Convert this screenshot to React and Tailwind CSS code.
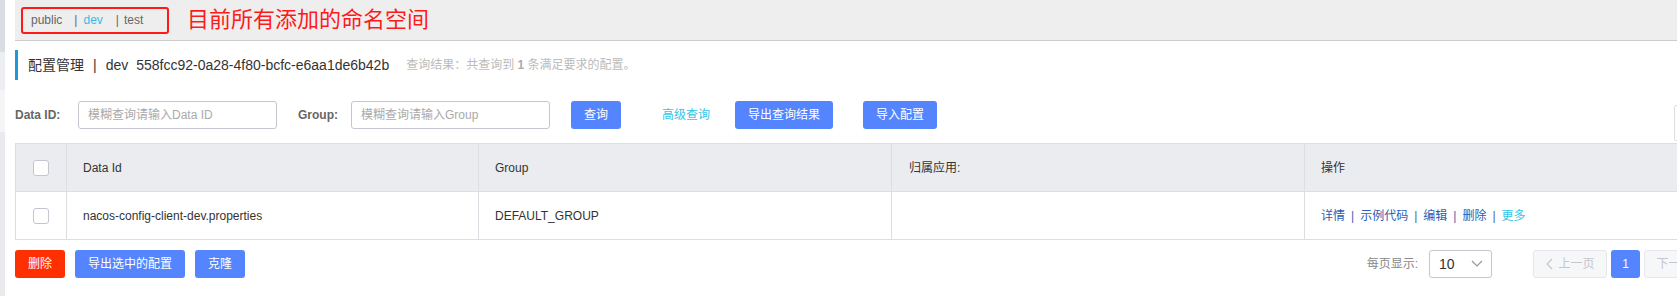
import React from "react"

const Checkbox = () => (
    <span className="block w-4 h-4 rounded-[3px] border border-[#c4c6cf] bg-white" />
)

const Btn = ({ children, red }) => (
    <button
        className={`h-[28px] px-[13px] rounded-[3px] text-[12px] text-white shrink-0 ${red ? "bg-[#ff3000]" : "bg-[#5584ff]"}`}
    >
        {children}
    </button>
)

const Sep = () => <span className="mx-[6px] text-[#4a64a8]">|</span>

function App() {
    return (
        <div className="relative flex w-[1677px] h-[296px] overflow-hidden bg-white font-['Liberation_Sans','Noto_Sans_CJK_SC',sans-serif]">
            {/* left edge strip */}
            <div className="w-[5px] shrink-0 flex flex-col">
                <div className="h-[52px] bg-[#d9dce2]" />
                <div className="h-[38px] bg-[#eceef2]" />
                <div className="h-[42px] bg-[#f4f5f7]" />
                <div className="flex-1 bg-[#e8eaee]" />
            </div>

            <div className="pl-[10px] shrink-0 w-[1713px]">
                {/* namespace bar */}
                <div className="h-[41px] bg-[#eeeeee] border-b border-[#cccccc] flex items-center">
                    <div className="ml-[6px] h-[27px] w-[148px] border-2 border-[#ff1a1a] rounded-[3px] flex items-center pl-[8px] text-[12px] text-[#666]">
                        <span>public</span>
                        <span className="ml-[12px]">|</span>
                        <span className="ml-[6px] text-[#33bde6]">dev</span>
                        <span className="ml-[13px]">|</span>
                        <span className="ml-[5px]">test</span>
                    </div>
                    <span className="ml-[18px] text-[22px] text-[#ff1a1a] leading-none">目前所有添加的命名空间</span>
                </div>

                {/* title */}
                <div className="mt-[9px] h-[30px] border-l-[3px] border-[#1a9ad6] flex items-center pl-[10px]">
                    <span className="text-[14px] text-[#333]">配置管理</span>
                    <span className="text-[14px] text-[#333] mx-[9px]">|</span>
                    <span className="text-[14px] text-[#333]">dev</span>
                    <span className="text-[14px] text-[#333] ml-[8px]">558fcc92-0a28-4f80-bcfc-e6aa1de6b42b</span>
                    <span className="ml-[17px] text-[12px] text-[#bbbbbb]">
                        查询结果：共查询到 <b className="text-[#aaa]">1</b> 条满足要求的配置。
                    </span>
                </div>

                {/* search row */}
                <div className="mt-[21px] h-[28px] flex items-center text-[12px]">
                    <span className="font-bold text-[#666] w-[63px] shrink-0">Data ID:</span>
                    <div className="w-[199px] h-[28px] border border-[#c4c6cf] rounded-[3px] flex items-center pl-[9px] text-[#aaa] shrink-0">
                        模糊查询请输入Data ID
                    </div>
                    <span className="ml-[21px] font-bold text-[#666] w-[53px] shrink-0">Group:</span>
                    <div className="w-[199px] h-[28px] border border-[#c4c6cf] rounded-[3px] flex items-center pl-[9px] text-[#aaa] shrink-0">
                        模糊查询请输入Group
                    </div>
                    <div className="ml-[21px]"><Btn>查询</Btn></div>
                    <span className="ml-[41px] text-[#33c5e6]">高级查询</span>
                    <div className="ml-[25px]"><Btn>导出查询结果</Btn></div>
                    <div className="ml-[30px]"><Btn>导入配置</Btn></div>
                </div>

                {/* table */}
                <div className="mt-[14px] border-l border-[#dcdee3] text-[12px] text-[#333]">
                    <div className="flex h-[49px] bg-[#ebecf0] border-y border-[#dcdee3]">
                        <div className="w-[50px] flex items-center justify-center"><Checkbox /></div>
                        <div className="w-[412px] border-l border-[#dcdee3] flex items-center pl-[16px]">Data Id</div>
                        <div className="w-[413px] border-l border-[#dcdee3] flex items-center pl-[16px]">Group</div>
                        <div className="w-[413px] border-l border-[#dcdee3] flex items-center pl-[17px]">归属应用:</div>
                        <div className="flex-1 border-l border-[#dcdee3] flex items-center pl-[16px]">操作</div>
                    </div>
                    <div className="flex h-[48px] border-b border-[#dcdee3]">
                        <div className="w-[50px] flex items-center justify-center"><Checkbox /></div>
                        <div className="w-[412px] border-l border-[#dcdee3] flex items-center pl-[16px]">nacos-config-client-dev.properties</div>
                        <div className="w-[413px] border-l border-[#dcdee3] flex items-center pl-[16px]">DEFAULT_GROUP</div>
                        <div className="w-[413px] border-l border-[#dcdee3]" />
                        <div className="flex-1 border-l border-[#dcdee3] flex items-center pl-[16px] text-[#2b5cb4]">
                            <span>详情</span>
                            <Sep />
                            <span>示例代码</span>
                            <Sep />
                            <span>编辑</span>
                            <Sep />
                            <span>删除</span>
                            <Sep />
                            <span className="text-[#33c5e6]">更多</span>
                        </div>
                    </div>
                </div>

                {/* footer */}
                <div className="mt-[10px] h-[28px] flex items-center text-[12px]">
                    <Btn red>删除</Btn>
                    <div className="ml-[10px]"><Btn>导出选中的配置</Btn></div>
                    <div className="ml-[10px]"><Btn>克隆</Btn></div>

                    <div className="ml-auto flex items-center">
                        <span className="text-[#888]">每页显示:</span>
                        <div className="ml-[11px] w-[63px] h-[28px] border border-[#c4c6cf] rounded-[3px] flex items-center justify-between pl-[9px] pr-[8px] text-[14px] text-[#333]">
                            <span>10</span>
                            <svg width="12" height="8" viewBox="0 0 12 8" fill="none">
                                <polyline points="1,1 6,6 11,1" stroke="#999" strokeWidth="1.2" />
                            </svg>
                        </div>
                        <div className="ml-[41px] w-[74px] h-[28px] rounded-[3px] border border-[#e6e7eb] bg-[#f6f7f9] flex items-center justify-center text-[#c4c6cf]">
                            <svg width="8" height="12" viewBox="0 0 8 12" fill="none" className="mr-[5px]">
                                <polyline points="7,1 2,6 7,11" stroke="#c4c6cf" strokeWidth="1.2" />
                            </svg>
                            上一页
                        </div>
                        <div className="ml-[4px] w-[29px] h-[28px] rounded-[3px] bg-[#5584ff] text-white flex items-center justify-center">1</div>
                        <div className="ml-[4px] w-[74px] h-[28px] rounded-[3px] border border-[#e6e7eb] bg-[#f6f7f9] flex items-center justify-center text-[#c4c6cf]">
                            下一页
                            <svg width="8" height="12" viewBox="0 0 8 12" fill="none" className="ml-[5px]">
                                <polyline points="1,1 6,6 1,11" stroke="#c4c6cf" strokeWidth="1.2" />
                            </svg>
                        </div>
                    </div>
                </div>
            </div>

            {/* partially visible floating box on the right edge */}
            <div className="absolute left-[1674px] top-[105px] w-[30px] h-[36px] border border-[#dcdee3] bg-white rounded-[2px]" />
        </div>
    )
}

export default App
